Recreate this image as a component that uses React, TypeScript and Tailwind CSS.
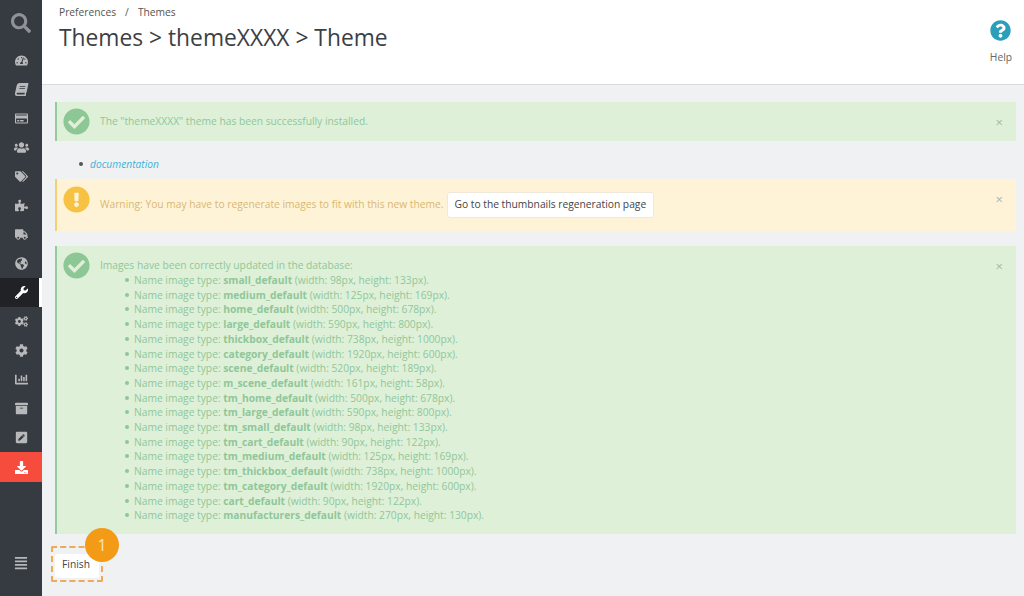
import { ReactNode } from 'react';
import {
  FaSearch, FaTachometerAlt, FaBook, FaRegCreditCard, FaUsers, FaTags, FaPuzzlePiece, FaTruck,
  FaGlobeAmericas, FaWrench, FaCogs, FaCog, FaChartBar, FaArchive, FaPenSquare, FaDownload,
  FaAlignJustify, FaCheckCircle, FaExclamationCircle, FaQuestionCircle,
} from 'react-icons/fa';

const navIcons = [
  FaTachometerAlt, FaBook, FaRegCreditCard, FaUsers, FaTags, FaPuzzlePiece, FaTruck, FaGlobeAmericas,
  FaWrench, FaCogs, FaCog, FaChartBar, FaArchive, FaPenSquare, FaDownload,
];

const imageTypes = [
  ['small_default', '98px', '133px'],
  ['medium_default', '125px', '169px'],
  ['home_default', '500px', '678px'],
  ['large_default', '590px', '800px'],
  ['thickbox_default', '738px', '1000px'],
  ['category_default', '1920px', '600px'],
  ['scene_default', '520px', '189px'],
  ['m_scene_default', '161px', '58px'],
  ['tm_home_default', '500px', '678px'],
  ['tm_large_default', '590px', '800px'],
  ['tm_small_default', '98px', '133px'],
  ['tm_cart_default', '90px', '122px'],
  ['tm_medium_default', '125px', '169px'],
  ['tm_thickbox_default', '738px', '1000px'],
  ['tm_category_default', '1920px', '600px'],
  ['cart_default', '90px', '122px'],
  ['manufacturers_default', '270px', '130px'],
];

const Sidebar = () => (
  <aside className="flex w-[42px] shrink-0 flex-col bg-[#363a41] text-[#b6b8ba]">
    <div className="flex h-[46px] items-center justify-center">
      <FaSearch className="h-[20px] w-[20px] text-[#8f9296]" />
    </div>
    {navIcons.map((Icon, i) => (
      <div
        key={i}
        className={
          i === 8
            ? 'flex h-[29px] items-center justify-center border-r-[3px] border-white bg-[#202226] pl-[3px] text-white'
            : i === 14
              ? 'flex h-[30px] items-center justify-center bg-[#f54c3e] text-white'
              : 'flex h-[29px] items-center justify-center'
        }
      >
        <Icon className={i === 1 ? 'h-[13px] w-[13px] -skew-x-12' : i === 3 ? 'h-[15px] w-[15px]' : 'h-[13px] w-[13px]'} />
      </div>
    ))}
    <div className="mt-auto flex justify-center pb-[26px]">
      <FaAlignJustify className="h-[14px] w-[14px]" />
    </div>
  </aside>
);

const Alert = ({ tone, icon, children, className }: { tone: 'green' | 'yellow'; icon: ReactNode; children: ReactNode; className: string }) => (
  <div
    className={`relative flex border-l-[2px] pl-[6px] pr-[40px] ${className} ${
      tone === 'green' ? 'border-[#93cb9c] bg-[#dff0d8] text-[#8fc79a]' : 'border-[#f5cf74] bg-[#fff3d7] text-[#d9b871]'
    }`}
  >
    <div className="mr-[10px] shrink-0">{icon}</div>
    <div className="min-w-0 flex-1">{children}</div>
    <span className="absolute right-[13px] top-[12px] text-[13px] leading-[16px] text-[#a9b5a8]">×</span>
  </div>
);

export default function App() {
  return (
    <div className="flex h-[596px] w-[1024px] overflow-hidden bg-[#eff1f2] font-['Open_Sans',sans-serif]">
      <Sidebar />
      <main className="flex min-w-0 flex-1 flex-col">
        <header className="flex h-[85px] shrink-0 justify-between border-b border-[#d9dcde] bg-white pl-[17px] pr-[12px]">
          <div>
            <div className="flex gap-[9px] pt-[5px] text-[10.25px] leading-[14px] text-[#555]">
              <span>Preferences</span>
              <span>/</span>
              <span>Themes</span>
            </div>
            <h1 className="mt-[2px] text-[22.8px] leading-[34px] text-[#3c3f44]">Themes &gt; themeXXXX &gt; Theme</h1>
          </div>
          <div className="flex flex-col items-center pt-[20px]">
            <FaQuestionCircle className="h-[21px] w-[21px] text-[#2a9fbc]" />
            <span className="mt-[9px] text-[10.25px] leading-[14px] text-[#666]">Help</span>
          </div>
        </header>

        <div className="flex flex-1 flex-col pl-[13px] pr-[8px] pt-[17px]">
          <Alert
            tone="green"
            className="h-[39px] items-center"
            icon={<FaCheckCircle className="h-[27px] w-[27px] text-[#8cc795]" />}
          >
            <p className="text-[10.25px]">The "themeXXXX" theme has been successfully installed.</p>
          </Alert>

          <ul className="ml-[24px] mt-[16px] h-[22px] text-[10.25px] leading-[14px]">
            <li className="flex">
              <span className="mr-[7px] mt-[5px] h-[4px] w-[4px] rounded-full bg-[#555]" />
              <a className="italic text-[#3fb2d6]">documentation</a>
            </li>
          </ul>

          <Alert
            tone="yellow"
            className="h-[52px] items-center"
            icon={<FaExclamationCircle className="h-[27px] w-[27px] -translate-y-[6px] text-[#f7c243]" />}
          >
            <div className="flex items-center text-[10.25px]">
              <span>Warning: You may have to regenerate images to fit with this new theme.</span>
              <button className="ml-[3px] h-[26px] rounded-[3px] border border-[#efe9dc] bg-white px-[7px] text-[10.25px] text-[#444]">
                Go to the thumbnails regeneration page
              </button>
            </div>
          </Alert>

          <Alert
            tone="green"
            className="mt-[15px] h-[288px] pt-[6px]"
            icon={<FaCheckCircle className="h-[27px] w-[27px] text-[#8cc795]" />}
          >
            <p className="pt-[6px] text-[10.25px] leading-[14px]">Images have been correctly updated in the database:</p>
            <ul className="ml-[25px] mt-[1px] text-[10.25px] leading-[14.7px]">
              {imageTypes.map(([name, w, h]) => (
                <li key={name} className="flex">
                  <span className="mr-[5px] mt-[5px] h-[4px] w-[4px] shrink-0 rounded-full bg-current" />
                  <span>
                    Name image type: <b className="font-bold">{name}</b> (width: {w}, height: {h}).
                  </span>
                </li>
              ))}
            </ul>
          </Alert>

          <div className="relative ml-[-4px] mt-[12px] w-[52px]">
            <div className="rounded-[2px] border-2 border-dashed border-[#f0a956] px-[2px] py-[2px]">
              <button className="h-[24px] w-full rounded-[2px] bg-white pb-[3px] pr-[2px] text-[10.25px] text-[#444]">Finish</button>
            </div>
            <span className="absolute left-[34px] top-[-18px] flex h-[34px] w-[34px] items-center justify-center rounded-full bg-[#f39a16] text-[16px] text-[#fde3b8]">
              1
            </span>
          </div>
        </div>
      </main>
    </div>
  );
}
